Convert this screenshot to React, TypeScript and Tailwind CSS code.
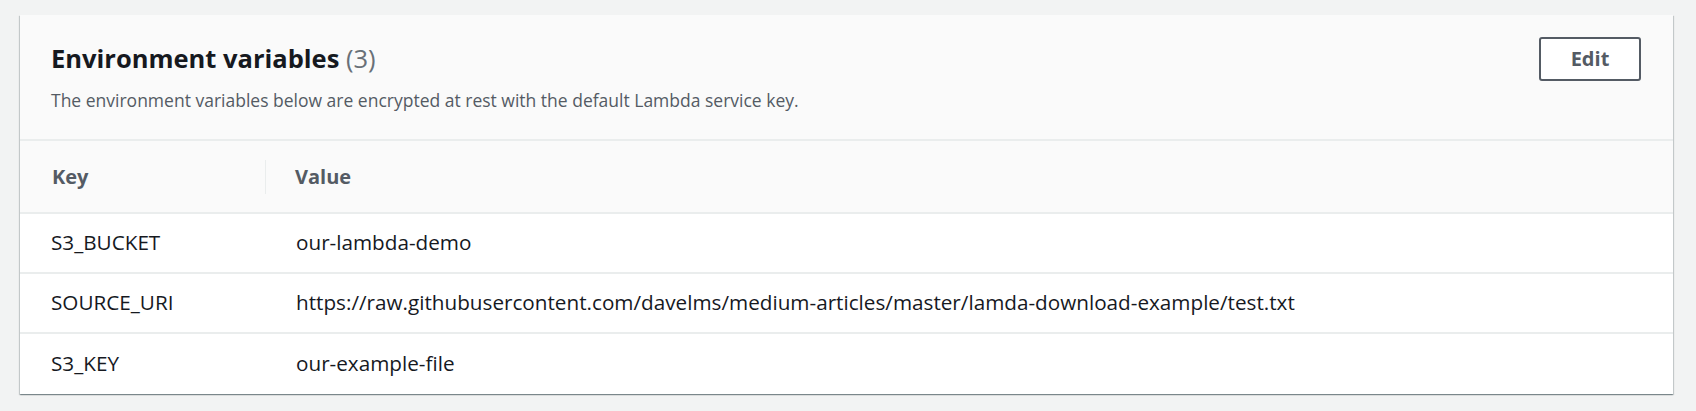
const envVars = [
  { key: 'S3_BUCKET', value: 'our-lambda-demo' },
  {
    key: 'SOURCE_URI',
    value: 'https://raw.githubusercontent.com/davelms/medium-articles/master/lamda-download-example/test.txt',
  },
  { key: 'S3_KEY', value: 'our-example-file' },
];

const App = () => {
  return (
    <div
      className="min-h-[411px] bg-[#f2f3f3] pt-[15px] pl-[20px] pr-[23px] pb-[17px]"
      style={{ fontFamily: '"Open Sans", "Noto Sans", Arial, sans-serif' }}
    >
      <div className="bg-white shadow-[0_1px_1px_0_rgba(0,28,36,0.3),1px_1px_1px_0_rgba(0,28,36,0.15),-1px_1px_1px_0_rgba(0,28,36,0.15)]">
        {/* Header */}
        <div className="flex items-start justify-between bg-[#fafafa] pl-[31px] pr-[32px] pt-[22px] pb-[26px] border-b-2 border-[#eaeded]">
          <div className="pt-[3px]">
            <h2 className="text-[25.5px] leading-[36px] font-bold text-[#16191f]">
              Environment variables <span className="font-normal text-[#687078]">(3)</span>
            </h2>
            <p className="mt-[12px] text-[17.5px] leading-[25px] text-[#545b64]">
              The environment variables below are encrypted at rest with the default Lambda service key.
            </p>
          </div>
          <button className="h-[44px] w-[102px] rounded-[3px] border-2 border-[#545b64] bg-white text-[20px] font-bold text-[#545b64]">
            Edit
          </button>
        </div>

        {/* Table */}
        <div className="grid grid-cols-[246px_1fr] bg-[#fafafa] h-[73px] items-center border-b-2 border-[#eaeded]">
          <div className="pl-[32px] text-[20px] font-bold text-[#545b64] border-r border-[#eaeded] h-[34px] flex items-center">
            Key
          </div>
          <div className="pl-[29px] text-[20px] font-bold text-[#545b64]">Value</div>
        </div>
        {envVars.map((row, i) => (
          <div
            key={row.key}
            className={`grid grid-cols-[246px_1fr] items-center h-[60px] ${
              i < envVars.length - 1 ? 'border-b-2 border-[#eaeded]' : ''
            }`}
          >
            <div className="pl-[31px] text-[20.7px] text-[#16191f]">{row.key}</div>
            <div className="pl-[30px] text-[20.7px] text-[#16191f]">{row.value}</div>
          </div>
        ))}
      </div>
    </div>
  );
};

export default App;
